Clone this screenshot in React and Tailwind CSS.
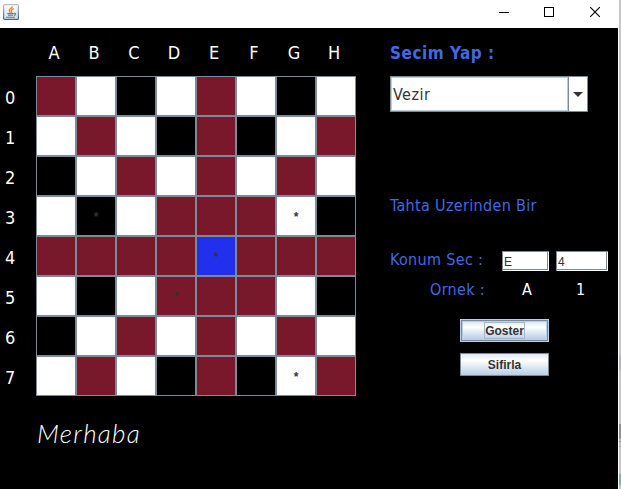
const board = [
  "RWBWRWBW",
  "WRWBRBWR",
  "BWRWRWRW",
  "WBWRRRWB",
  "RRRRURRR",
  "WBWRRRWB",
  "BWRWRWRW",
  "WRWBRBWR",
];

const fills = { R: "bg-[#7a182b]", W: "bg-white", B: "bg-black", U: "bg-[#222fec]" };
const stars = ["3-1", "3-6", "4-4", "5-3", "7-6"];

function JavaIcon() {
  return (
    <svg width="16" height="16" viewBox="0 0 16 16" fill="none">
      <defs>
        <linearGradient id="tile" x1="0" y1="0" x2="0" y2="1">
          <stop offset="0" stopColor="#ffffff" />
          <stop offset="1" stopColor="#cfdce6" />
        </linearGradient>
        <linearGradient id="rim" x1="0" y1="0" x2="0" y2="1">
          <stop offset="0" stopColor="#b9bec2" />
          <stop offset="1" stopColor="#46688a" />
        </linearGradient>
      </defs>
      <rect x=".6" y=".6" width="14.8" height="14.8" rx="1" fill="url(#tile)" stroke="url(#rim)" strokeWidth="1.2" />
      <path d="M9.200 2.200C10 4.200 5.200 4.700 6.400 7.200L7.300 8.800M10.800 4.700C8.300 5.600 7.600 6.400 8.600 7.600Q9 8.200 8.300 8.900" stroke="#e8822a" strokeWidth="1.3" />
      <path d="M4.300 9.600H10.800M5 11.300H10M11 9.300Q13.300 9 12.400 10.600Q12 11.200 11 11.400M3.300 13.300H12" stroke="#53809f" strokeWidth="1.1" />
    </svg>
  );
}

function TitleBar() {
  return (
    <header className="flex h-7 w-full bg-white pt-1 pl-[3px]">
      <JavaIcon />
      <svg className="ml-[480px]" width="103" height="16" viewBox="0 0 103 16" fill="none" stroke="#000">
        <path d="M0 8.500H10M45.500 3.500H54.500V12.500H45.500Z" shapeRendering="crispEdges" />
        <path d="M91.200 3.200L100.800 12.800M100.800 3.200L91.200 12.800" strokeWidth="1.1" />
      </svg>
    </header>
  );
}

function Board() {
  return (
    <section className="w-[356px]">
      <div className="flex h-12 pl-[34px] pt-[13px] text-[18px] leading-6 text-white">
        {"ABCDEFGH".split("").map((c) => (
          <span key={c} className="w-10 text-center">{c}</span>
        ))}
      </div>
      {board.map((row, r) => (
        <div key={r} className="flex h-10">
          <span className="w-9 pl-[5px] pt-[10px] text-[18px] leading-6 text-white">{r}</span>
          {row.split("").map((c, i) => (
            <div key={i} className={"flex size-10 justify-center border border-[#7a8a99] pt-[12px] font-['Liberation_Sans'] text-[12px] leading-4 font-bold text-[#333] " + fills[c]}>
              {stars.includes(r + "-" + i) ? "*" : ""}
            </div>
          ))}
        </div>
      ))}
      <p className="mt-5 ml-[37px] font-['Lato'] text-[26px] leading-[34px] font-light tracking-[1.3px] text-white italic">Merhaba</p>
    </section>
  );
}

function Controls() {
  return (
    <section className="ml-[34px] w-[228px] text-[16px] tracking-[0.33px] whitespace-nowrap text-[#4169e1]">
      <h1 className="pt-[13px] text-[17px] leading-6 font-bold tracking-[0.5px]">Secim Yap :</h1>
      <div className="mt-[11px] flex h-9 w-[198px] border border-[#7a8a99] bg-white">
        <div className="w-[177px] border border-[#b8cfe5] pl-px leading-[33px] tracking-[0.5px] text-[#333]">Vezir</div>
        <div className="flex flex-1 items-center justify-center border-l border-[#7a8a99]">
          <svg width="10" height="5" viewBox="0 0 10 5"><path d="M0 0H10L5 5Z" fill="#333" /></svg>
        </div>
      </div>
      <p className="mt-[82px] leading-6">Tahta Uzerinden Bir</p>
      <div className="mt-[29px] flex h-6">
        <span className="w-28 pt-px leading-6">Konum Sec :</span>
        <div className="mt-1 h-5 w-[47px] border-t border-l border-[#7a8a99] bg-white"><div className="h-[18px] w-[45px] border-r border-b border-[#7a8a99] pl-px font-['Liberation_Sans'] text-[12px] leading-[20px] tracking-normal text-[#333]">E</div></div>
        <div className="mt-1 ml-[7px] h-5 w-[52px] border-t border-l border-[#7a8a99] bg-white"><div className="h-[18px] w-[50px] border-r border-b border-[#7a8a99] pl-px font-['Liberation_Sans'] text-[12px] leading-[20px] tracking-normal text-[#333]">4</div></div>
      </div>
      <div className="mt-[7px] flex leading-6">
        <span className="w-[91px] pl-10">Ornek :</span>
        <span className="ml-[41px] w-[54px] text-white">A</span>
        <span className="text-white">1</span>
      </div>
      <div className="mt-[17px] ml-[70px] flex w-[89px] flex-col gap-[11px] font-['Liberation_Sans'] text-[12px] font-bold tracking-normal text-[#333]">
        <button className="flex h-[23px] items-center justify-center border border-[#b8cfe5] bg-[#7a8a99] p-px">
          <span className="flex h-full w-full items-center justify-center border border-[#b8cfe5] bg-linear-to-b from-[#dde8f3] via-white via-30% to-[#b8cfe5]">
            <span className="h-[17px] border border-[#a3b8cc] leading-4">Goster</span>
          </span>
        </button>
        <button className="h-[23px] border border-[#7a8a99] bg-linear-to-b from-[#dde8f3] via-white via-30% to-[#b8cfe5] leading-[22px]">Sifirla</button>
      </div>
    </section>
  );
}

export default function App() {
  return (
    <div className="flex h-[489px] w-[621px] overflow-hidden bg-black font-['DejaVu_Sans_Condensed','DejaVu_Sans',sans-serif] font-stretch-condensed">
      <main className="w-[618px]">
        <TitleBar />
        <div className="flex">
          <Board />
          <Controls />
        </div>
      </main>
      <aside className="flex w-[3px] flex-col border-l border-white bg-[#c9c5c4]">
        <div className="mt-[355px] h-[15px] bg-[#aeb9c8]" />
        <div className="mt-[54px] h-[15px] bg-[#96918f]" />
        <div className="mt-[2px] h-px bg-[#8e8a88]" />
        <div className="mt-[4px] h-px bg-[#aaa6a4]" />
        <div className="mt-[27px] h-[11px] bg-[#75b9ac]" />
      </aside>
    </div>
  );
}
